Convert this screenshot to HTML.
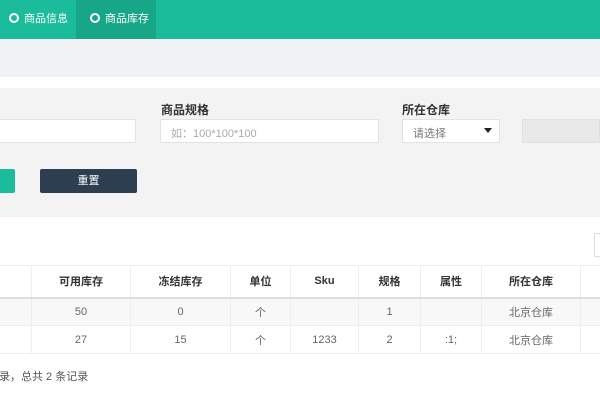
<!DOCTYPE html><html><head><meta charset="utf-8"><style>
*{margin:0;padding:0;box-sizing:border-box}
html,body{width:600px;height:400px;overflow:hidden}
body{position:relative;background:#fff;font-family:"Liberation Sans","Noto Sans CJK SC",sans-serif;font-size:12px;color:#555}
.a{position:absolute}
.top{left:0;top:0;width:600px;height:39px;background:#1bbc9b}
.act{left:76px;top:0;width:80px;height:39px;background:#18a689}
.tab{top:12px;color:#fff;font-size:11px;line-height:14px}
.c{display:inline-block;width:10px;height:10px;border:2px solid #fff;border-radius:50%;margin-right:5px;vertical-align:-1px}
.lbl{font-weight:bold;color:#333;font-size:12px}
.inp{background:#fff;border:1px solid #e2e2e2;height:24px;top:119px;font-size:11px;color:#aaa;padding:5px 10px}
table{border-collapse:collapse;position:absolute;left:-1px;top:265px;table-layout:fixed;width:601px}
td,th{border:1px solid #eee;text-align:center;height:28px;font-size:11px;color:#666;overflow:hidden;white-space:nowrap}
th{height:32px;font-weight:bold;color:#333;border-bottom:2px solid #ddd}
tr.r1 td{background:#f8f8f8}
</style></head><body>
<div class="a top"></div><div class="a act"></div>
<div class="a tab" style="left:9px"><span class="c"></span>商品信息</div>
<div class="a tab" style="left:90px"><span class="c"></span>商品库存</div>
<div class="a" style="left:0;top:39px;width:600px;height:38px;background:#f0f2f4"></div>
<div class="a" style="left:0;top:88px;width:600px;height:129px;background:#f3f3f3"></div>
<div class="a lbl" style="left:161px;top:101px">商品规格</div>
<div class="a lbl" style="left:402px;top:101px">所在仓库</div>
<div class="a inp" style="left:-2px;width:138px"></div>
<div class="a inp" style="left:160px;width:219px">如：100*100*100</div>
<div class="a inp" style="left:402px;width:98px;color:#777">请选择<span style="position:absolute;right:7px;top:8px;border:4px solid transparent;border-top:5px solid #222;border-bottom:0"></span></div>
<div class="a" style="left:522px;top:119px;width:78px;height:24px;background:#e9e9e9;border:1px solid #e0e0e0"></div>
<div class="a" style="left:-4px;top:169px;width:19px;height:24px;background:#1bbc9b;border-radius:2px"></div>
<div class="a" style="left:40px;top:169px;width:97px;height:24px;background:#2c3e50;border-radius:2px;color:#fff;font-size:11px;text-align:center;line-height:24px">重置</div>
<div class="a" style="left:594px;top:233px;width:6px;height:24px;border:1px solid #ddd;border-right:0"></div>
<table>
<colgroup><col style="width:32px"><col style="width:99px"><col style="width:100px"><col style="width:60px"><col style="width:68px"><col style="width:62px"><col style="width:61px"><col style="width:99px"><col style="width:20px"></colgroup>
<tr><th></th><th>可用库存</th><th>冻结库存</th><th>单位</th><th>Sku</th><th>规格</th><th>属性</th><th>所在仓库</th><th></th></tr>
<tr class="r1"><td></td><td>50</td><td>0</td><td>个</td><td></td><td>1</td><td></td><td>北京仓库</td><td></td></tr>
<tr><td></td><td>27</td><td>15</td><td>个</td><td>1233</td><td>2</td><td>:1;</td><td>北京仓库</td><td></td></tr>
</table>
<div class="a" style="left:-1px;top:368px;font-size:11px;color:#555">录，总共 2 条记录</div>
</body></html>
